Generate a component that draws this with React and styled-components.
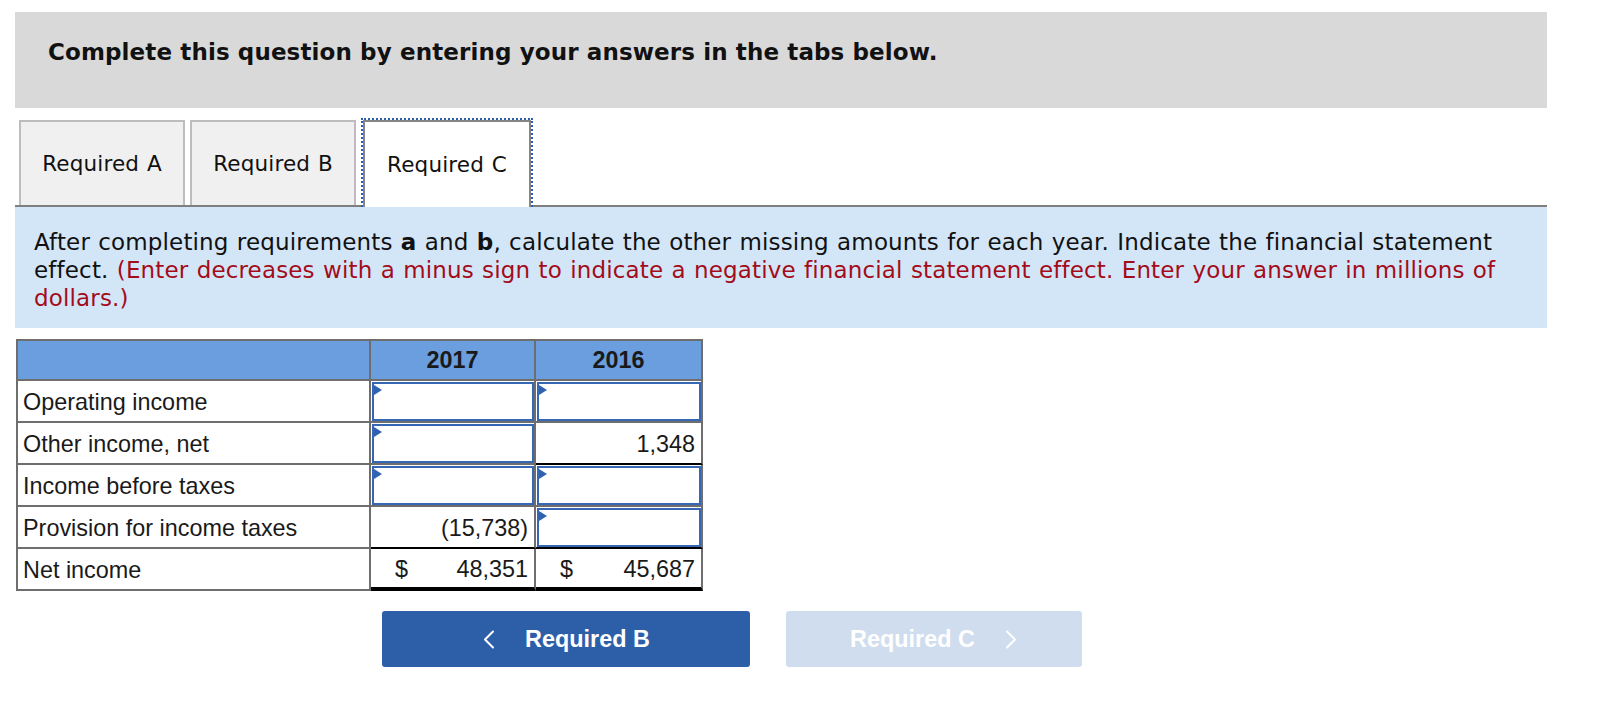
import React from 'react';
import styled, { createGlobalStyle } from 'styled-components';

const GlobalStyle = createGlobalStyle`
  * { box-sizing: border-box; }
  body {
    margin: 0;
    background: #fff;
    font-family: "DejaVu Sans", Verdana, sans-serif;
    color: #111;
  }
`;

const rows = [
  { label: 'Operating income', y2017: { input: true }, y2016: { input: true } },
  { label: 'Other income, net', y2017: { input: true }, y2016: { value: '1,348', rule: 'single' } },
  { label: 'Income before taxes', y2017: { input: true }, y2016: { input: true } },
  { label: 'Provision for income taxes', y2017: { value: '(15,738)', rule: 'single' }, y2016: { input: true, rule: 'single' } },
  { label: 'Net income', y2017: { value: '48,351', dollar: true, rule: 'double' }, y2016: { value: '45,687', dollar: true, rule: 'double' } },
];

const Chevron = ({ dir }) => (
  <svg width="13" height="19" viewBox="0 0 13 19" fill="none">
    <polyline
      points={dir === 'left' ? '11,1.5 3,9.5 11,17.5' : '2,1.5 10,9.5 2,17.5'}
      stroke="#fff"
      strokeWidth="2"
      strokeLinecap="round"
      strokeLinejoin="round"
    />
  </svg>
);

const ValueCell = ({ cell }) => {
  if (cell.input) {
    return (
      <InputCell $rule={cell.rule}>
        <InputWrap>
          <Marker />
          <AmountInput type="text" />
        </InputWrap>
      </InputCell>
    );
  }
  return (
    <AmountCell $rule={cell.rule}>
      <Amount>
        {cell.dollar ? <span>$</span> : <span />}
        <span>{cell.value}</span>
      </Amount>
    </AmountCell>
  );
};

export default function App() {
  return (
    <Page>
      <GlobalStyle />
      <Banner>Complete this question by entering your answers in the tabs below.</Banner>

      <TabBar>
        <Tab>Required A</Tab>
        <Tab>Required B</Tab>
        <Tab $active>Required C</Tab>
      </TabBar>

      <Instructions>
        After completing requirements <b>a</b> and <b>b</b>, calculate the other missing amounts
        for each year. Indicate the financial statement effect.{' '}
        <Hint>
          (Enter decreases with a minus sign to indicate a negative financial statement effect.
          Enter your answer in millions of dollars.)
        </Hint>
      </Instructions>

      <Sheet>
        <thead>
          <tr>
            <HeadCell $label />
            <HeadCell>2017</HeadCell>
            <HeadCell $wide>2016</HeadCell>
          </tr>
        </thead>
        <tbody>
          {rows.map((row) => (
            <tr key={row.label}>
              <LabelCell>{row.label}</LabelCell>
              <ValueCell cell={row.y2017} />
              <ValueCell cell={row.y2016} />
            </tr>
          ))}
        </tbody>
      </Sheet>

      <NavRow>
        <NavButton>
          <Chevron dir="left" />
          Required B
        </NavButton>
        <NavButton $disabled $width={296}>
          Required C
          <Chevron dir="right" />
        </NavButton>
      </NavRow>
    </Page>
  );
}

const Page = styled.div`
  width: 1532px;
  margin: 12px 0 0 15px;
`;

const Banner = styled.div`
  background: #d9d9d9;
  padding: 26px 33px 42px;
  font-size: 23px;
  line-height: 28px;
  font-weight: bold;
  letter-spacing: 0.12px;
  color: #111;
`;

const TabBar = styled.div`
  display: flex;
  align-items: flex-end;
  gap: 5px;
  margin-top: 12px;
  padding-left: 4px;
  border-bottom: 2px solid #7f7f7f;
`;

const Tab = styled.div`
  display: flex;
  align-items: center;
  justify-content: center;
  width: ${(p) => (p.$active ? '168px' : '166px')};
  height: ${(p) => (p.$active ? '87px' : '85px')};
  margin-bottom: ${(p) => (p.$active ? '-2px' : '0')};
  margin-left: ${(p) => (p.$active ? '2px' : '0')};
  background: ${(p) => (p.$active ? '#fff' : '#f0f0f0')};
  border: 2px solid ${(p) => (p.$active ? '#858585' : '#bdbdbd')};
  border-bottom: none;
  font-size: 21.5px;
  letter-spacing: 0.15px;
  word-spacing: 0.8px;
  color: #111;
  position: relative;
  z-index: ${(p) => (p.$active ? 1 : 0)};

  &::before {
    content: '';
    display: ${(p) => (p.$active ? 'block' : 'none')};
    position: absolute;
    left: -4px;
    right: -4px;
    top: -4px;
    bottom: 0;
    border: 2px dotted #2c5fb0;
    border-bottom: none;
  }
`;

const Instructions = styled.div`
  background: #d3e6f7;
  padding: 21px 19px 16px;
  font-size: 23px;
  line-height: 28px;
  letter-spacing: 0.15px;
  word-spacing: 0.8px;
  color: #111;

  b {
    font-weight: bold;
  }
`;

const Hint = styled.span`
  color: #a30c1b;
`;

const Sheet = styled.table`
  margin: 11px 0 0 1px;
  border-collapse: separate;
  border-spacing: 0;
  border-top: 2px solid #6e6e6e;
  border-left: 2px solid #6e6e6e;
  font-family: "Liberation Sans", Arial, sans-serif;
  font-size: 23.4px;
  color: #1a1a1a;

  td, th {
    border-right: 2px solid #6e6e6e;
    border-bottom: 2px solid #6e6e6e;
    padding: 0;
  }
`;

const HeadCell = styled.th`
  width: ${(p) => (p.$label ? '353px' : p.$wide ? '167px' : '165px')};
  height: 40px;
  background: #6a9edf;
  font-weight: bold;
  text-align: center;
`;

const LabelCell = styled.td`
  height: 42px;
  padding: 2px 0 0 5px !important;
  text-align: left;
`;

const ruleBorder = (rule) =>
  rule === 'double' ? '4px solid #000' : rule === 'single' ? '2px solid #000' : '2px solid #6e6e6e';

const AmountCell = styled.td`
  height: 42px;
  padding-top: 2px !important;
  border-bottom: ${(p) => ruleBorder(p.$rule)} !important;
`;

const Amount = styled.div`
  display: flex;
  justify-content: space-between;
  padding: 0 6px 0 24px;
`;

const InputCell = styled.td`
  height: 42px;
  padding: 1px 0 0 1px !important;
  border-bottom: ${(p) => ruleBorder(p.$rule)} !important;
`;

const InputWrap = styled.div`
  position: relative;
  height: 39px;
`;

const AmountInput = styled.input`
  display: block;
  width: 100%;
  height: 100%;
  border: 2px solid #3567b4;
  background: #fff;
  outline: none;
`;

const Marker = styled.span`
  position: absolute;
  left: 2px;
  top: 3px;
  width: 0;
  height: 0;
  border-top: 5px solid transparent;
  border-bottom: 5px solid transparent;
  border-left: 8px solid #2f63b2;
`;

const NavRow = styled.div`
  display: flex;
  gap: 36px;
  margin: 20px 0 0 367px;
`;

const NavButton = styled.button`
  display: flex;
  align-items: center;
  justify-content: center;
  gap: 30px;
  width: ${(p) => p.$width || 368}px;
  height: 56px;
  border: none;
  border-radius: 3px;
  background: ${(p) => (p.$disabled ? '#d0ddee' : '#2d5fa9')};
  color: #fff;
  font-family: "Liberation Sans", Arial, sans-serif;
  font-size: 23.4px;
  font-weight: bold;
  padding: 0;
  cursor: ${(p) => (p.$disabled ? 'default' : 'pointer')};
`;
